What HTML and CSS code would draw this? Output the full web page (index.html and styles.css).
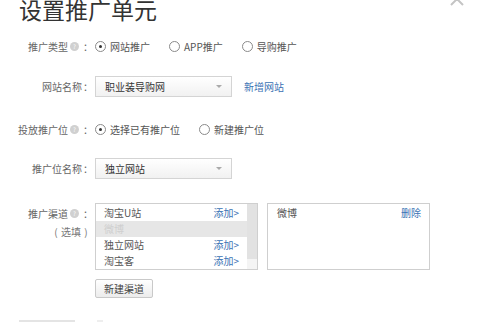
FILE: index.html
```html
<html>
<head>
	<title>设置推广单元</title>
	<link rel="stylesheet" href="styles.css">
</head>
<body>
	<div id='dialog'>
		<svg class='close' width='16' height='16' viewBox='0 0 16 16'>
			<path d='M2 2 L14 14 M14 2 L2 14' stroke='#c4c4c4' stroke-width='2' fill='none'/>
		</svg>
		<h1 class='title'>设置推广单元</h1>

		<div class='form'>
			<div class='row row-type'>
				<div class='label'>推广类型<span class='help'>?</span><span class='colon'>：</span></div>
				<div class='field'>
					<span class='radio checked'></span><span class='opt'>网站推广</span>
					<span class='radio'></span><span class='opt'>APP推广</span>
					<span class='radio'></span><span class='opt'>导购推广</span>
				</div>
			</div>

			<div class='row row-site'>
				<div class='label'>网站名称<span class='colon'>：</span></div>
				<div class='field'>
					<div class='select'>职业装导购网<span class='arrow'></span></div>
					<a class='link add-site'>新增网站</a>
				</div>
			</div>

			<div class='row row-place'>
				<div class='label'>投放推广位<span class='help'>?</span><span class='colon'>：</span></div>
				<div class='field'>
					<span class='radio checked'></span><span class='opt'>选择已有推广位</span>
					<span class='radio'></span><span class='opt'>新建推广位</span>
				</div>
			</div>

			<div class='row row-placename'>
				<div class='label'>推广位名称<span class='colon'>：</span></div>
				<div class='field'>
					<div class='select'>独立网站<span class='arrow'></span></div>
				</div>
			</div>

			<div class='row row-channel'>
				<div class='label label-top'>
					<div>推广渠道<span class='help'>?</span><span class='colon'>：</span></div>
					<div class='optional'><span class='paren'>(</span>选填<span class='paren'>)</span></div>
				</div>
				<div class='field field-top'>
					<div class='channels'>
						<div class='listbox'>
							<div class='items'>
								<div class='item'><span>淘宝U站</span><a class='link'>添加&gt;</a></div>
								<div class='item disabled'><span>微博</span></div>
								<div class='item'><span>独立网站</span><a class='link'>添加&gt;</a></div>
								<div class='item'><span>淘宝客</span><a class='link'>添加&gt;</a></div>
							</div>
							<div class='scrollbar'><div class='thumb'></div></div>
						</div>
						<div class='listbox chosen'>
							<div class='items'>
								<div class='item'><span>微博</span><a class='link'>删除</a></div>
							</div>
						</div>
					</div>
					<div class='button'>新建渠道</div>
				</div>
			</div>
		</div>

		<div class='footer'>
			<div class='footer-line'></div>
			<div class='footer-tick'></div>
		</div>
	</div>
</body>
</html>
```

FILE: styles.css
```css
body{
	margin:0;
	background-color:white;
	font-family: "Noto Sans CJK SC", "Liberation Sans", sans-serif;
	font-size:10px;
	color:#555;
}
#dialog{
	position:relative;
	width:479px;
	height:323px;
	overflow:hidden;
}
.close{
	position:absolute;
	top:-9px;
	left:449px;
}
.title{
	margin:-4px 0 0 19px;
	font-size:23px;
	line-height:26px;
	font-weight:normal;
	color:#333;
}
.form{
	margin-top:13px;
}
.row{
	display:flex;
	align-items:center;
	height:22px;
}
.row-site{ margin-top:18px; }
.row-place{ margin-top:21px; }
.row-placename{ margin-top:17px; }
.row-channel{
	margin-top:24px;
	height:auto;
	align-items:flex-start;
}
.label{
	width:93px;
	flex-shrink:0;
	text-align:right;
	color:#666;
	display:flex;
	align-items:center;
	justify-content:flex-end;
}
.colon{
	display:inline-block;
	width:10px;
	text-align:center;
	margin-left:1px;
}
.label-top{
	flex-direction:column;
	align-items:flex-end;
	padding-top:3px;
}
.label-top div{
	display:flex;
	align-items:center;
	height:14px;
}
.optional{
	margin-top:4px;
	margin-right:2px;
	color:#777;
}
.paren{
	display:inline-block;
	width:10px;
	text-align:center;
}
.help{
	display:inline-block;
	width:9px;
	height:9px;
	line-height:9px;
	border-radius:50%;
	background-color:#d0d0d0;
	color:white;
	font-size:6px;
	text-align:center;
	margin:0 3px 0 2px;
}
.field{
	margin-left:2px;
	display:flex;
	align-items:center;
}
.field-top{
	flex-direction:column;
	align-items:flex-start;
}
.radio{
	display:inline-block;
	box-sizing:border-box;
	width:11px;
	height:11px;
	border:1px solid #8a8a8a;
	border-radius:50%;
	margin-right:4px;
	position:relative;
}
.radio.checked:after{
	content:'';
	position:absolute;
	left:3px;
	top:3px;
	width:3px;
	height:3px;
	border-radius:50%;
	background-color:#333;
}
.opt{
	margin-right:19px;
	color:#555;
}
.select{
	box-sizing:border-box;
	width:137px;
	height:21px;
	line-height:19px;
	border:1px solid #d4d4d4;
	background:linear-gradient(#ffffff, #f1f1f1);
	padding-left:9px;
	color:#333;
	position:relative;
}
.arrow{
	position:absolute;
	right:9px;
	top:8px;
	width:0;
	height:0;
	border-left:3px solid transparent;
	border-right:3px solid transparent;
	border-top:3px solid #aaa;
}
.link{
	color:#3a72b4;
}
.add-site{
	margin-left:12px;
}
.channels{
	display:flex;
}
.listbox{
	box-sizing:border-box;
	width:163px;
	height:67px;
	border:1px solid #cfcfcf;
	display:flex;
	padding-top:1px;
}
.listbox.chosen{
	margin-left:9px;
}
.items{
	flex:1;
}
.item{
	height:16px;
	line-height:16px;
	display:flex;
	justify-content:space-between;
	padding:0 8px;
	color:#555;
}
.chosen .item{
	padding:0 8px 0 9px;
}
.item.disabled{
	background-color:#e6e6e6;
	color:#cfcfcf;
}
.scrollbar{
	width:10px;
	background-color:#f4f4f4;
	margin-top:-1px;
}
.thumb{
	height:55px;
	background-color:#e2e2e2;
}
.button{
	margin-top:9px;
	box-sizing:border-box;
	width:58px;
	height:19px;
	line-height:17px;
	text-align:center;
	border:1px solid #c9c9c9;
	border-radius:2px;
	background:linear-gradient(#ffffff, #ececec);
	color:#444;
}
.footer{
	position:absolute;
	top:320px;
	left:19px;
	display:flex;
}
.footer-line{
	width:56px;
	height:2px;
	background-color:#e4e4e4;
}
.footer-tick{
	width:6px;
	height:2px;
	background-color:#eee;
	margin-left:22px;
}
```
